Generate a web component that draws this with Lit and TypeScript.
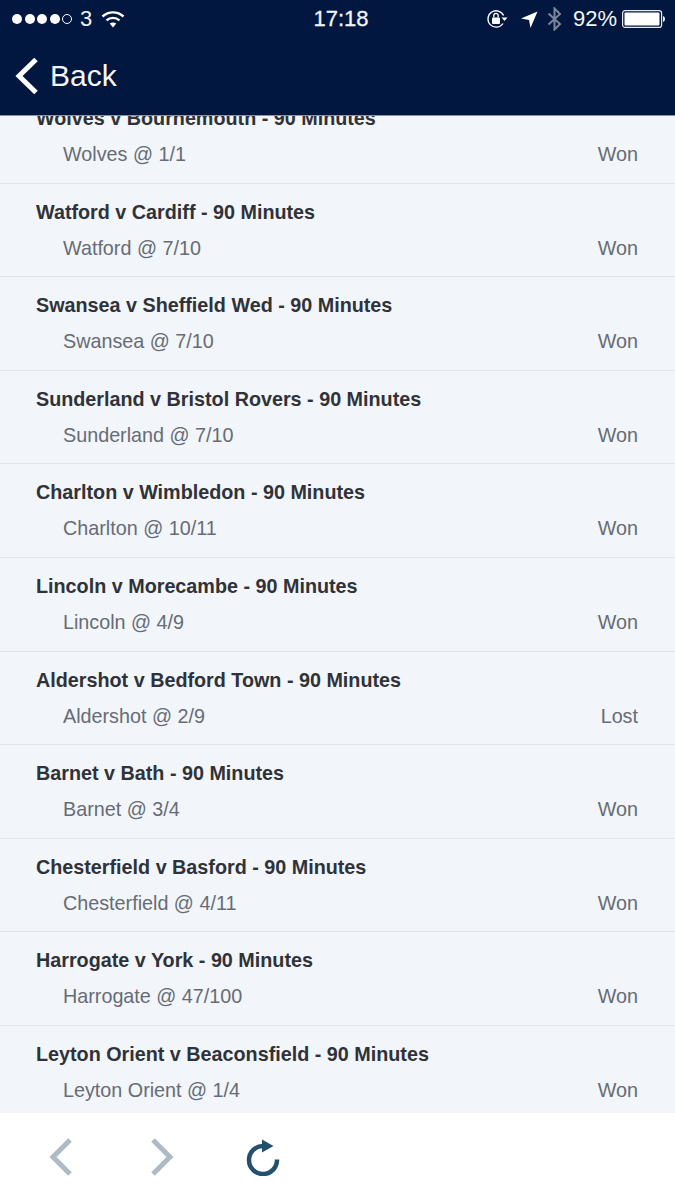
import { LitElement, html, css } from "lit";
import { customElement } from "lit/decorators.js";

const rows: [string, string, string][] = [
  ["Wolves v Bournemouth - 90 Minutes", "Wolves @ 1/1", "Won"],
  ["Watford v Cardiff - 90 Minutes", "Watford @ 7/10", "Won"],
  ["Swansea v Sheffield Wed - 90 Minutes", "Swansea @ 7/10", "Won"],
  ["Sunderland v Bristol Rovers - 90 Minutes", "Sunderland @ 7/10", "Won"],
  ["Charlton v Wimbledon - 90 Minutes", "Charlton @ 10/11", "Won"],
  ["Lincoln v Morecambe - 90 Minutes", "Lincoln @ 4/9", "Won"],
  ["Aldershot v Bedford Town - 90 Minutes", "Aldershot @ 2/9", "Lost"],
  ["Barnet v Bath - 90 Minutes", "Barnet @ 3/4", "Won"],
  ["Chesterfield v Basford - 90 Minutes", "Chesterfield @ 4/11", "Won"],
  ["Harrogate v York - 90 Minutes", "Harrogate @ 47/100", "Won"],
  ["Leyton Orient v Beaconsfield - 90 Minutes", "Leyton Orient @ 1/4", "Won"],
];

@customElement("app-root")
export class AppRoot extends LitElement {
  static styles = css`
    :host { display: flex; flex-direction: column; width: 675px; height: 1200px; overflow: hidden; background: #fff; font-family: "Liberation Sans", Arial, sans-serif; }
    .top { height: 116px; flex: none; background: #02173f; color: #fff; display: flex; flex-direction: column; position: relative; z-index: 1; border-bottom: 1px solid #8a93a3; box-sizing: border-box; }
    .status { height: 38px; flex: none; display: grid; grid-template-columns: minmax(0, 1fr) auto minmax(0, 1fr); align-items: center; font-size: 22px; color: #f2f4f8; }
    .sl, .sr { display: flex; align-items: center; }
    .sl { padding-left: 12px; }
    .sr { justify-content: flex-end; padding-right: 10px; }
    .dots { display: flex; gap: 2.5px; margin-right: 8px; }
    .dot { width: 10px; height: 10px; border-radius: 50%; background: #fff; box-sizing: border-box; }
    .dot.off { background: none; border: 1px solid #fff; }
    .time { font-size: 22px; padding-left: 7px; -webkit-text-stroke: 0.3px #f2f4f8; }
    .carrier { margin-right: 9px; }
    .pct { margin: 0 5px 0 11px; }
    .nav { display: flex; align-items: center; padding-left: 15px; gap: 11px; flex: 1; margin-bottom: 1px; }
    .back { font-size: 30px; color: #f4f6fa; }
    .list { flex: none; height: 997px; overflow: hidden; background: #f2f5fa; }
    .inner { margin-top: -26px; }
    .row { box-sizing: border-box; height: 93.6px; border-bottom: 1px solid #e2e6ec; padding: 16px 37px 0 36px; }
    .title { font-size: 19.75px; line-height: 24px; font-weight: 700; color: #2f3238; }
    .line { display: flex; justify-content: space-between; padding-left: 27px; margin-top: 12px; font-size: 19.75px; line-height: 24px; color: #666c75; }
    .bottom { flex: 1; background: #fff; display: flex; align-items: center; padding: 0 0 0 49px; gap: 77px; }
    .refresh { margin-left: -6px; }
    .lock { margin-right: 13px; }
    .arrow { margin-right: 9px; }
    svg { display: block; }
  `;
  render() {
    return html`
      <div class="top">
        <div class="status">
          <div class="sl">
            <div class="dots"><i class="dot"></i><i class="dot"></i><i class="dot"></i><i class="dot"></i><i class="dot off"></i></div>
            <span class="carrier">3</span>
            <svg width="24" height="18" viewBox="0 0 24 18" fill="none" stroke="#fff" stroke-width="2.4">
              <path d="M1.5 6.5C7.5 1 16.5 1 22.5 6.5"/>
              <path d="M5.5 10.3C9.3 7 14.7 7 18.5 10.3"/>
              <path d="M12 17.5L8.7 13.6C10.6 12.1 13.4 12.1 15.3 13.6Z" fill="#fff" stroke="none"/>
            </svg>
          </div>
          <div class="time">17:18</div>
          <div class="sr">
            <svg class="lock" width="22" height="20" viewBox="0 0 22 20" fill="none">
              <path d="M17.6 6.5A8.2 8.2 0 1 0 17 14.5" stroke="#fff" stroke-width="1.3"/>
              <rect x="6" y="8.5" width="8" height="6.5" rx="1" fill="#fff"/>
              <path d="M7.8 8.5V6.5a2.2 2.2 0 0 1 4.4 0v2" stroke="#fff" stroke-width="1.3"/>
              <path d="M15.5 8.5h6l-3 3.5z" fill="#fff"/>
            </svg>
            <svg class="arrow" width="17" height="17" viewBox="0 0 17 17"><path d="M0 7.5L16.5 0.5L9.5 17L8 9Z" fill="#fff"/></svg>
            <svg width="15" height="24" viewBox="0 0 15 24" fill="none" stroke="#7c8699" stroke-width="2"><path d="M1.5 6.5L13 17L7.5 22.5V1.5L13 7L1.5 17.5"/></svg>
            <span class="pct">92%</span>
            <svg width="43" height="18" viewBox="0 0 43 18">
              <rect x="0.6" y="0.6" width="39" height="16.8" rx="2.5" fill="none" stroke="#e6e9ef" stroke-width="1.2"/>
              <rect x="2.5" y="2.5" width="35" height="13" rx="1" fill="#fff"/>
              <path d="M41 6c1.4 .3 2 1.5 2 3s-.6 2.7-2 3z" fill="#e6e9ef"/>
            </svg>
          </div>
        </div>
        <div class="nav">
          <svg width="24" height="38" viewBox="0 0 24 38" fill="none" stroke="#fff" stroke-width="5"><path d="M21 2.5L4 19L21 35.5"/></svg>
          <span class="back">Back</span>
        </div>
      </div>
      <div class="list"><div class="inner">
        ${rows.map(r => html`<div class="row">
          <div class="title">${r[0]}</div>
          <div class="line"><span>${r[1]}</span><span>${r[2]}</span></div>
        </div>`)}
      </div></div>
      <div class="bottom">
        <svg width="24" height="38" viewBox="0 0 24 38" fill="none" stroke="#adbbc5" stroke-width="5"><path d="M21 2L4 19L21 36"/></svg>
        <svg width="24" height="38" viewBox="0 0 24 38" fill="none" stroke="#adbbc5" stroke-width="5"><path d="M3 2L20 19L3 36"/></svg>
        <svg class="refresh" width="36" height="38" viewBox="0 0 36 38" fill="none">
          <path d="M18 8A14 14 0 1 0 32 21.500" stroke="#24506f" stroke-width="4.5"/>
          <path d="M17 1.500L28.500 8L17 14.500Z" fill="#24506f"/>
        </svg>
      </div>`;
  }
}
